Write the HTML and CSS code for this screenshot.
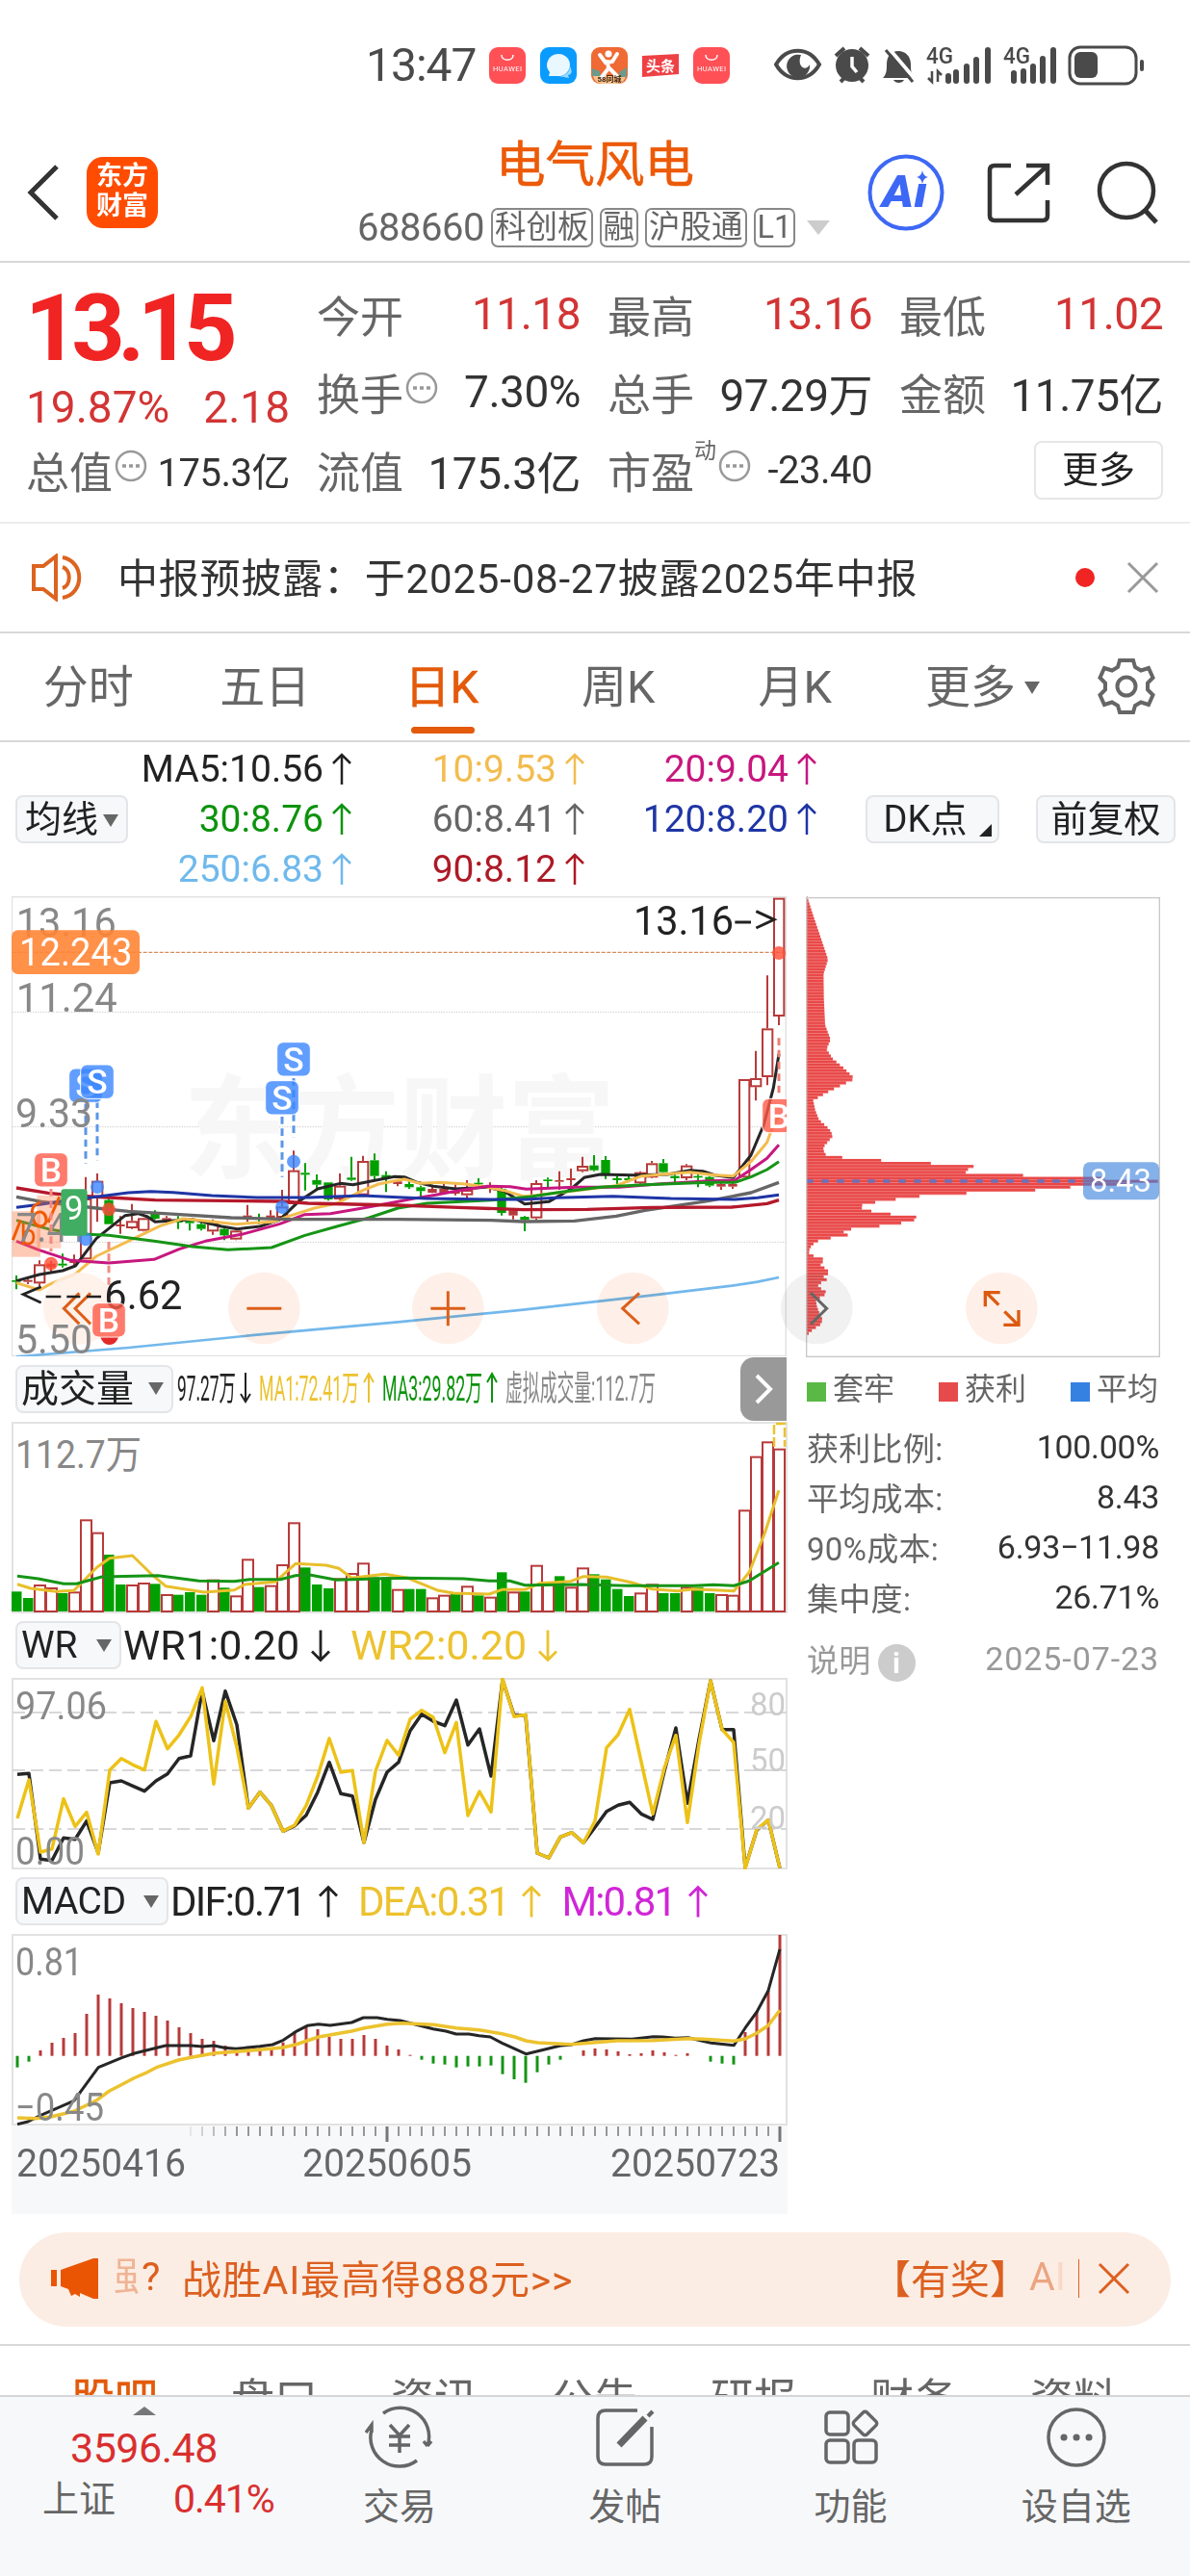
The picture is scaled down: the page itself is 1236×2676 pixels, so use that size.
FILE: index.html
```html
<!DOCTYPE html>
<html lang="zh-CN">

<head>
    <meta charset="UTF-8">
    <meta name="viewport" content="width=device-width, initial-scale=1.0">
    <title>电气风电 688660</title>
    <link rel="stylesheet" href="styles.css">
</head>

<body>
    <svg class="defs">
        <symbol id="up" viewBox="0 0 22 34"><path d="M11 33V2M2 11l9-9 9 9" /></symbol>
        <symbol id="down" viewBox="0 0 22 34"><path d="M11 1v31M2 23l9 9 9-9" /></symbol>
        <symbol id="dots" viewBox="0 0 34 34">
            <circle cx="17" cy="17" r="15" fill="none" stroke="#999" stroke-width="2.5" />
            <path d="M8 17h4M15 17h4M22 17h4" stroke="#999" stroke-width="3.5" />
        </symbol>
    </svg>

    <div class="status-bar">
        <span class="time">13:47</span>
        <svg class="app-icon" viewBox="0 0 38 38">
            <rect width="38" height="38" rx="9" fill="#ff5056" />
            <path d="M13 8c0 7 12 7 12 0" fill="none" stroke="#fff" stroke-width="1.5" />
            <text x="4" y="25" font-size="7.500" textLength="30" fill="#fff">HUAWEI</text>
        </svg>
        <svg class="app-icon" viewBox="0 0 38 38">
            <rect width="38" height="38" rx="9" fill="#0a9bff" />
            <path d="M19 7a12 11.500 0 0 0-9 19l-1 4h10a12 11.500 0 0 0 0-23z" fill="#e9f7ff" />
            <path d="M19 30c8 0 12-5 12-10 2 4 3 8-2 9l1 3z" fill="#9bd8ff" />
        </svg>
        <svg class="app-icon" viewBox="0 0 38 38">
            <rect width="38" height="38" rx="9" fill="#ef6a35" />
            <path d="M2 29h34a9 9 0 0 1-9 9H11a9 9 0 0 1-9-9z" fill="#f3c48d" />
            <path d="M1 22l8 3 1 5H1zM37 21l-8 5 1 5h7z" fill="#6d9a8b" />
            <circle cx="18" cy="7" r="3.500" fill="#fff" />
            <path d="M9 8l6 8 7-1 5-8M17 15l1 7-7 9M18 21l9 9" fill="none" stroke="#fff" stroke-width="4" stroke-linecap="round" />
            <text x="19" y="36" font-size="8" font-weight="bold" text-anchor="middle" fill="#4a2410">58同城</text>
        </svg>
        <svg class="app-icon" viewBox="0 0 38 38">
            <path d="M0 9l38-2v21L0 31z" fill="#ee4145" />
            <text x="19" y="25" font-size="15" font-weight="bold" text-anchor="middle" fill="#fff">头条</text>
        </svg>
        <svg class="app-icon" viewBox="0 0 38 38">
            <rect width="38" height="38" rx="9" fill="#ff5056" />
            <path d="M13 8c0 7 12 7 12 0" fill="none" stroke="#fff" stroke-width="1.5" />
            <text x="4" y="25" font-size="7.500" textLength="30" fill="#fff">HUAWEI</text>
        </svg>
        <svg class="status-icons" viewBox="804 46 390 44" fill="#4a4a4a">
            <path d="M806 67c11-19 34-19 45 0-11 19-34 19-45 0z" fill="none" stroke="#4a4a4a" stroke-width="4" />
            <path d="M832 57a12 12 0 1 0 9 10c-4 8-14 2-9-10z" />
            <circle cx="885" cy="68" r="17" />
            <path d="M868 58l9-8M902 58l-9-8M873 85l5-5M897 85l-5-5" stroke="#4a4a4a" stroke-width="4" />
            <path d="M885 59v10l5 6" fill="none" stroke="#fff" stroke-width="3.500" />
            <path d="M917 81c4-4 4-9 4-14 0-9 5-14 12-14s13 5 13 14c0 5 0 10 4 14zM928 83h11c-2 4-9 4-11 0z" />
            <path d="M923 50l28 33" stroke="#fff" stroke-width="4" />
            <path d="M920 52l28 33" stroke="#4a4a4a" stroke-width="3" />
            <path d="M985 84v-5M993 84v-9M1004 84v-15M1014 84v-22M1026 84V52M1053 84v-8M1063 84v-10M1073 84v-15M1083 84v-23M1094 84V52" stroke="#4a4a4a" stroke-width="6" stroke-linecap="round" />
            <path d="M968 74v11l-4-4M974 85V74l4 4" fill="none" stroke="#4a4a4a" stroke-width="2.500" />
            <text x="962" y="66" font-size="24" font-weight="500" textLength="28" lengthAdjust="spacingAndGlyphs">4G</text>
            <text x="1042" y="66" font-size="24" font-weight="500" textLength="28" lengthAdjust="spacingAndGlyphs">4G</text>
            <rect x="1111" y="49" width="69" height="38" rx="11" fill="none" stroke="#4a4a4a" stroke-width="3" />
            <rect x="1116" y="54" width="24" height="27" rx="6" />
            <rect x="1184" y="62" width="4" height="12" rx="2" />
        </svg>
    </div>

    <div class="header">
        <svg class="back" viewBox="0 0 36 60"><path d="M31 3L4 30l27 27" /></svg>
        <div class="logo">东方<br>财富</div>
        <div class="title-box">
            <div class="title">电气风电</div>
            <div class="sub-title">
                <span class="code">688660</span>
                <span class="tag">科创板</span>
                <span class="tag">融</span>
                <span class="tag">沪股通</span>
                <span class="tag">L1</span>
                <span class="tri big"></span>
            </div>
        </div>
        <svg class="header-icons" viewBox="900 156 310 88">
            <circle cx="941" cy="200" r="37.500" fill="none" stroke="#3d68f5" stroke-width="4" />
            <text x="916" y="215" font-size="47" font-weight="900" fill="#3d68f5" textLength="47" lengthAdjust="spacingAndGlyphs" class="ai">Aı</text>
            <path d="M958 177q1 6 6 7-5 1-6 7-1-6-6-7 5-1 6-7z" fill="#3d68f5" />
            <path d="M1050 172h-17q-5 0-5 5v47q0 5 5 5h50q5 0 5-5v-16M1066 172h22v20M1087 173l-32 29" fill="none" stroke="#333" stroke-width="4.500" />
            <circle cx="1170" cy="198" r="28" fill="none" stroke="#333" stroke-width="4.500" />
            <path d="M1188 217l13 14" stroke="#333" stroke-width="5" />
        </svg>
    </div>

    <div class="quote">
        <div class="price-box">
            <div class="price">13.15</div>
            <div class="change"><span>19.87%</span><span>2.18</span></div>
            <div class="cell small"><label>总值</label><svg class="info"><use href="#dots" /></svg><span>175.3亿</span></div>
        </div>
        <div class="grid">
            <div class="cell"><label>今开</label><span class="red">11.18</span></div>
            <div class="cell"><label>最高</label><span class="red">13.16</span></div>
            <div class="cell"><label>最低</label><span class="red">11.02</span></div>
            <div class="cell"><label>换手</label><svg class="info"><use href="#dots" /></svg><span>7.30%</span></div>
            <div class="cell"><label>总手</label><span>97.29万</span></div>
            <div class="cell"><label>金额</label><span>11.75亿</span></div>
            <div class="cell"><label>流值</label><span>175.3亿</span></div>
            <div class="cell small"><label>市盈</label><sup>动</sup><svg class="info"><use href="#dots" /></svg><span>-23.40</span></div>
            <div class="cell"><button class="more">更多</button></div>
        </div>
    </div>

    <div class="notice">
        <svg class="horn" viewBox="0 0 56 50">
            <path d="M3 13h10L26 3v44L13 37H3zM33 14c9 3 9 19 0 22M33 4c23 4 23 38 0 42" fill="none" stroke="#dc6420" stroke-width="4" />
        </svg>
        <span class="notice-text">中报预披露：于2025-08-27披露2025年中报</span>
        <i class="red-dot"></i>
        <svg class="close" viewBox="0 0 34 34"><path d="M2 2l30 30M32 2L2 32" /></svg>
    </div>

    <div class="tabs">
        <span class="tab">分时</span>
        <span class="tab">五日</span>
        <span class="tab active">日K</span>
        <span class="tab">周K</span>
        <span class="tab">月K</span>
        <span class="tab">更多<i class="tri"></i></span>
        <svg class="gear" viewBox="-30 -30 60 60">
            <path d="M-7-27H7L9-20 15-16.500 23-19 27.500-9 22-3.500V3.500L27.500 9 23 19 15 16.500 9 20 7 27H-7L-9 20-15 16.500-23 19-27.500 9-22 3.500V-3.500L-27.500-9-23-19-15-16.500-9-20z" />
            <circle r="9.500" />
        </svg>
    </div>

    <div class="ma">
        <button class="btn ma-btn">均线<i class="tri"></i></button>
        <div class="ma-grid">
            <span class="c-black">MA5:10.56<svg class="arr"><use href="#up" /></svg></span>
            <span class="c-yellow">10:9.53<svg class="arr"><use href="#up" /></svg></span>
            <span class="c-pink">20:9.04<svg class="arr"><use href="#up" /></svg></span>
            <span class="c-green">30:8.76<svg class="arr"><use href="#up" /></svg></span>
            <span class="c-gray">60:8.41<svg class="arr"><use href="#up" /></svg></span>
            <span class="c-blue">120:8.20<svg class="arr"><use href="#up" /></svg></span>
            <span class="c-sky">250:6.83<svg class="arr"><use href="#up" /></svg></span>
            <span class="c-red">90:8.12<svg class="arr"><use href="#up" /></svg></span>
        </div>
        <button class="btn dk">DK点<i class="corner"></i></button>
        <button class="btn fq">前复权</button>
    </div>

    <div class="charts">
        <div class="left">
            <svg id="kline" class="kline" viewBox="36 33 2415 1434"></svg>
            <div class="ind-head vol-head">
                <button class="btn">成交量<i class="tri"></i></button>
                <svg class="vol-text" viewBox="184 1420 585 48">
                    <text x="184" y="1456" textLength="61" lengthAdjust="spacingAndGlyphs" fill="#222">97.27万</text>
                    <text x="269" y="1456" textLength="104" lengthAdjust="spacingAndGlyphs" fill="#ecc22e">MA1:72.41万</text>
                    <text x="397" y="1456" textLength="104" lengthAdjust="spacingAndGlyphs" fill="#0d930d">MA3:29.82万</text>
                    <text x="525" y="1456" textLength="156" lengthAdjust="spacingAndGlyphs" fill="#888">虚拟成交量:112.7万</text>
                    <path d="M255 1427v29M250 1449l5 8 5-8" stroke="#222" />
                    <path d="M383 1458v-29M378 1437l5-9 5 9" stroke="#ecc22e" />
                    <path d="M511 1458v-29M506 1437l5-9 5 9" stroke="#0d930d" />
                </svg>
                <div class="side-btn"><svg viewBox="0 0 20 32"><path d="M3 2l14 14L3 30" /></svg></div>
            </div>
            <svg id="volume" class="volume" viewBox="12 1477 806 199"></svg>
            <div class="ind-head wr-head">
                <button class="btn">WR<i class="tri"></i></button>
                <span class="c-black">WR1:0.20<svg class="arr"><use href="#down" /></svg></span>
                <span class="c-gold">WR2:0.20<svg class="arr"><use href="#down" /></svg></span>
            </div>
            <svg id="wr" class="wr" viewBox="12 1743 806 199"></svg>
            <div class="ind-head macd-head">
                <button class="btn">MACD<i class="tri"></i></button>
                <span class="c-black">DIF:0.71<svg class="arr"><use href="#up" /></svg></span>
                <span class="c-gold">DEA:0.31<svg class="arr"><use href="#up" /></svg></span>
                <span class="c-purple">M:0.81<svg class="arr"><use href="#up" /></svg></span>
            </div>
            <svg id="macd" class="macd" viewBox="12 2009 806 199"></svg>
            <svg id="axis" class="axis" viewBox="12 2208 806 92"></svg>
        </div>
        <div class="right">
            <svg id="chips" class="chips" viewBox="51 33 1104 1437"></svg>
            <div class="legend">
                <span><i class="sq green"></i>套牢</span>
                <span><i class="sq red"></i>获利</span>
                <span><i class="sq blue"></i>平均</span>
            </div>
            <div class="stat"><label>获利比例:</label><span>100.00%</span></div>
            <div class="stat"><label>平均成本:</label><span>8.43</span></div>
            <div class="stat"><label>90%成本:</label><span>6.93−11.98</span></div>
            <div class="stat"><label>集中度:</label><span>26.71%</span></div>
            <div class="stat note"><label>说明<i class="i-icon">i</i></label><span>2025-07-23</span></div>
        </div>
    </div>

    <div class="banner">
        <svg class="speaker" viewBox="0 0 50 44"><path d="M0 13h6v17H0zM10 13L44 1h5v42h-5l-14-6v4l-5-3-4 2-3-7-8-3z" /></svg>
        <span class="faded">强</span><span class="q">?</span>
        <span class="banner-text">战胜AI最高得888元&gt;&gt;</span>
        <span class="prize">【有奖】</span>
        <span class="fade-a">A<b>I</b></span>
        <i class="bar"></i>
        <svg class="close" viewBox="0 0 34 34"><path d="M2 2l30 30M32 2L2 32" /></svg>
    </div>

    <div class="sub-tabs">
        <span class="active">股吧</span>
        <span>盘口</span>
        <span>资讯</span>
        <span>公告</span>
        <span>研报</span>
        <span>财务</span>
        <span>资料</span>
    </div>

    <div class="bottom-bar">
        <div class="index">
            <i class="tri-up"></i>
            <div class="index-num">3596.48</div>
            <div class="index-row"><span>上证</span><span class="pct">0.41%</span></div>
        </div>
        <div class="nav">
            <svg viewBox="-36 -36 72 72">
                <path d="M-17-25A30 30 0 0 1 29 9M29 9l4-5M29 9l-4-5M18 24A30 30 0 0 1-29-8M-35-5l6-8v8M-10-13L0-2 10-13M0-2V16M-11-1H11M-11 8H11" />
            </svg>
            <span>交易</span>
        </div>
        <div class="nav">
            <svg viewBox="-36 -36 72 72">
                <path d="M13-28H-20q-8 0-8 8V20q0 8 8 8H20q8 0 8-8V-11" />
                <path d="M25-26l3 3M21-20L-6 8" stroke-width="7" />
            </svg>
            <span>发帖</span>
        </div>
        <div class="nav">
            <svg viewBox="-36 -36 72 72">
                <rect x="-26" y="-26" width="23" height="23" rx="4" />
                <rect x="-26" y="3" width="23" height="23" rx="4" />
                <rect x="3" y="3" width="23" height="23" rx="4" />
                <rect x="5" y="-24" width="19" height="19" rx="3" transform="rotate(45 14.500 -14.500)" />
            </svg>
            <span>功能</span>
        </div>
        <div class="nav">
            <svg viewBox="-36 -36 72 72">
                <circle r="29" />
                <path d="M-13 0h.1M0 0h.1M13 0h.1" stroke-width="7" stroke-linecap="round" />
            </svg>
            <span>设自选</span>
        </div>
    </div>
    <script src="charts.js"></script>
</body>

</html>
```
FILE: styles.css
```css
* {
    box-sizing: border-box;
}

body {
    margin: 0;
    width: 1236px;
    height: 2676px;
    overflow: hidden;
    display: flex;
    flex-direction: column;
    background: #fff;
    color: #333;
    font-family: Roboto, "Noto Sans CJK SC", sans-serif;
}

span,
label,
button,
div {
    white-space: nowrap;
}

button {
    font-family: inherit;
    padding: 0;
    color: #222;
}

svg {
    display: block;
    flex: none;
}

svg text {
    font-family: Roboto, "Noto Sans CJK SC", sans-serif;
}

.defs {
    position: absolute;
    width: 0;
    height: 0;
}

.tri {
    display: inline-block;
    border: 8px solid transparent;
    border-top: 13px solid #666;
    border-bottom: 0;
}

.tri.big {
    border-width: 15px 12px 0;
    border-top-color: #ccc;
    margin-left: 5px;
}

/* status bar */
.status-bar {
    height: 138px;
    padding: 0 0 2px 380px;
    display: flex;
    align-items: center;
    gap: 15px;
}

.time {
    width: 113px;
    font-size: 48px;
    letter-spacing: -1px;
    color: #4a4a4a;
}

.app-icon {
    width: 38px;
    height: 38px;
}

.status-icons {
    width: 390px;
    height: 44px;
    margin-left: 31px;
}

/* header */
.header {
    height: 135px;
    padding-left: 28px;
    display: flex;
    border-bottom: 2px solid #d8d8d8;
}

.back {
    width: 36px;
    height: 60px;
    margin-top: 32px;
    fill: none;
    stroke: #333;
    stroke-width: 5;
}

.logo {
    width: 74px;
    height: 74px;
    margin: 25px 0 0 26px;
    padding-top: 5px;
    border-radius: 17px;
    background: #ff4c00;
    color: #fff;
    font-size: 27px;
    font-weight: bold;
    line-height: 31px;
    text-align: center;
}

.title-box {
    width: 500px;
    margin-left: 207px;
}

.title {
    margin: 0 0 0 144px;
    font-size: 51.500px;
    line-height: 68px;
    color: #ec5a08;
    -webkit-text-stroke: .6px #ec5a08;
}

.sub-title {
    display: flex;
    align-items: center;
    gap: 7px;
    margin-top: 10px;
    height: 42px;
}

.code {
    width: 132px;
    font-size: 40px;
    letter-spacing: -.5px;
    color: #666;
}

.tag {
    height: 41px;
    padding: 0 2px;
    border: 2px solid #888;
    border-radius: 7px;
    font-size: 32.500px;
    line-height: 36px;
    color: #666;
}

.header-icons {
    width: 310px;
    height: 88px;
    margin: 18px 0 0 29px;
}

.ai {
    font-style: italic;
}

/* quote */
.quote {
    height: 271px;
    display: flex;
    padding: 13px 27px 0 27px;
    border-bottom: 2px solid #ececec;
}

.price-box {
    width: 302px;
    padding-right: 28px;
}

.price {
    height: 105px;
    margin-left: -1px;
    font-size: 97px;
    line-height: 111px;
    font-weight: bold;
    letter-spacing: -7.500px;
    color: #f12424;
}

.change {
    height: 57px;
    display: flex;
    justify-content: space-between;
    font-size: 46px;
    line-height: 64px;
    color: #d33434;
}

.grid {
    display: grid;
    flex: 1;
    grid-template-columns: 274px 275px 274px;
    grid-template-rows: 81px 81px 81px;
    column-gap: 28px;
}

.cell {
    display: flex;
    align-items: center;
    height: 81px;
    font-size: 46px;
}

.cell label {
    font-size: 45px;
    color: #666;
}

.cell span {
    margin-left: auto;
    letter-spacing: -.5px;
}

.cell.small span {
    font-size: 40px;
}

.cell .red {
    color: #d33434;
}

.info {
    width: 34px;
    height: 34px;
    margin: -8px 0 0 2px;
}

.cell sup {
    font-size: 23px;
    color: #666;
    margin: -44px 0 0 0;
}

.more {
    width: 134px;
    height: 61px;
    margin-left: auto;
    border: 2px solid #e6e6e6;
    border-radius: 8px;
    background: #fff;
    font-size: 38px;
    line-height: 48px;
}

/* notice */
.notice {
    height: 114px;
    display: flex;
    align-items: center;
    padding: 0 32px 0 32px;
    border-bottom: 2px solid #d8d8d8;
}

.horn {
    width: 56px;
    height: 50px;
}

.notice-text {
    margin: -5px 0 0 34px;
    font-size: 42px;
    letter-spacing: .8px;
}

.red-dot {
    width: 20px;
    height: 20px;
    margin-left: auto;
    border-radius: 50%;
    background: #f12424;
}

.close {
    width: 34px;
    height: 34px;
    margin-left: 33px;
    fill: none;
    stroke: #999;
    stroke-width: 3;
}

/* tabs */
.tabs {
    height: 113px;
    display: flex;
    align-items: center;
    border-bottom: 2px solid #d8d8d8;
    font-size: 47px;
    color: #666;
}

.tab {
    position: relative;
    width: 183.500px;
    line-height: 113px;
    text-align: center;
}

.tab:nth-child(6) {
    width: 206px;
}

.tab .tri {
    margin: 0 0 9px 9px;
}

.tab.active {
    color: #e35a0a;
    -webkit-text-stroke: .6px #e35a0a;
}

.tab.active::after {
    content: "";
    position: absolute;
    left: 60px;
    bottom: 8px;
    width: 66px;
    height: 7px;
    border-radius: 4px;
    background: #e35a0a;
}

.gear {
    width: 60px;
    height: 60px;
    margin-left: 16px;
    fill: none;
    stroke: #666;
    stroke-width: 4;
}

/* moving averages */
.btn {
    height: 50px;
    border: 2px solid #e4e5e8;
    border-radius: 8px;
    background: #f7f8fa;
    font-size: 38px;
    line-height: 42px;
    flex: none;
}

.ma {
    height: 160px;
    display: flex;
    align-items: center;
    padding-left: 16px;
}

.ma-btn {
    width: 117px;
}

.ma-btn .tri {
    margin: 0 0 5px 5px;
}

.ma-grid {
    display: grid;
    grid-template-columns: 233px 242px 241px;
    grid-template-rows: 52px 52px 52px;
    width: 716px;
}

.ma-grid span {
    display: flex;
    justify-content: flex-end;
    align-items: center;
    font-size: 39px;
}

.arr {
    width: 22px;
    height: 34px;
    margin-left: 8px;
    fill: none;
    stroke: currentColor;
    stroke-width: 2.500;
}

.dk {
    position: relative;
    width: 139px;
    margin-left: 50px;
    padding-right: 15px;
}

.corner {
    position: absolute;
    right: 6px;
    bottom: 5px;
    border-left: 13px solid transparent;
    border-bottom: 13px solid #222;
}

.fq {
    width: 145px;
    margin-left: 38px;
}

.c-black { color: #222; }
.c-yellow { color: #f3bc4f; }
.c-pink { color: #c7177f; }
.c-green { color: #0d930d; }
.c-gray { color: #666; }
.c-blue { color: #1f35a5; }
.c-sky { color: #6fb9ec; }
.c-red { color: #ad1a26; }
.c-gold { color: #ecc22e; }
.c-purple { color: #d026d6; }

/* charts */
.charts {
    height: 1389px;
    display: flex;
}

.left {
    width: 806px;
    margin-left: 12px;
}

.kline {
    width: 805px;
    height: 478px;
}

.ind-head {
    height: 68px;
    display: flex;
    align-items: center;
    padding-left: 4px;
    font-size: 43px;
}

.ind-head .btn {
    display: flex;
    align-items: center;
    justify-content: space-between;
    padding: 0 8px 0 4px;
    font-size: 39px;
}

.vol-head .btn {
    width: 164px;
}

.vol-text {
    width: 585px;
    height: 48px;
    margin-left: 4px;
    font-size: 36px;
    fill: none;
    stroke-width: 2;
}

.side-btn {
    width: 48px;
    height: 66px;
    flex: none;
    display: flex;
    align-items: center;
    justify-content: center;
    border-radius: 14px 0 0 14px;
    background: #999;
}

.side-btn svg {
    width: 20px;
    height: 32px;
    fill: none;
    stroke: #fff;
    stroke-width: 4;
}

.volume,
.wr,
.macd {
    width: 806px;
    height: 199px;
}

.wr-head,
.macd-head {
    height: 67px;
}

.wr-head .btn {
    width: 110px;
}

.macd-head .btn {
    width: 159px;
}

.ind-head > span {
    display: flex;
    align-items: center;
    margin-left: 2px;
}

.ind-head > span + span {
    margin-left: 20px;
}

.ind-head .arr {
    height: 37px;
    margin-left: 11px;
    stroke-width: 2.800;
}

.macd-head {
    font-size: 42px;
    letter-spacing: -1.800px;
}

.macd-head .btn {
    letter-spacing: -.5px;
}

.macd-head .arr {
    margin-left: 13px;
}

.axis {
    width: 806px;
    height: 92px;
    background: #f7f8fa;
}

.right {
    width: 368px;
    margin-left: 19px;
}

.chips {
    position: relative;
    width: 368px;
    height: 479px;
    overflow: visible;
}

.legend {
    height: 63px;
    display: flex;
    justify-content: space-between;
    align-items: center;
    padding: 0 2px 2px 1px;
    font-size: 32px;
    color: #666;
}

.sq {
    display: inline-block;
    width: 20px;
    height: 20px;
    margin-right: 7px;
    vertical-align: -2px;
}

.sq.green { background: #5ab946; }
.sq.red { background: #e74a4a; }
.sq.blue { background: #3581e2; }

.stat {
    height: 52px;
    display: flex;
    justify-content: space-between;
    align-items: center;
    padding: 9px 1px 0 1px;
    font-size: 34px;
    letter-spacing: -.3px;
}

.stat label {
    font-size: 33px;
    letter-spacing: .3px;
    color: #666;
}

.note,
.note label {
    color: #999;
}

.note {
    margin-top: 11px;
    height: 54px;
    letter-spacing: .9px;
}

.i-icon {
    display: inline-block;
    width: 39px;
    height: 39px;
    margin-left: 7px;
    border-radius: 50%;
    background: #ccc;
    color: #fff;
    font: bold 30px/39px Roboto, sans-serif;
    text-align: center;
    vertical-align: -1px;
}

/* banner */
.banner {
    height: 98px;
    margin: 0 20px;
    padding: 0 42px 2px 33px;
    display: flex;
    align-items: center;
    border-radius: 49px;
    background: #fcede4;
    color: #dc6020;
    font-size: 41px;
}

.banner span {
    margin-top: -4px;
}

.speaker {
    width: 50px;
    height: 44px;
    fill: #ea5504;
}

.faded {
    width: 26px;
    height: 56px;
    line-height: 56px;
    margin-left: 16px;
    overflow: hidden;
    direction: rtl;
    opacity: .4;
}

.q {
    width: 40px;
    padding-left: 2px;
}

.banner-text {
    margin-left: 4px;
    letter-spacing: .8px;
}

.prize {
    margin-left: auto;
}

.fade-a {
    width: 42px;
    opacity: .5;
}

.fade-a b {
    font-weight: normal;
    opacity: .3;
}

.bar {
    width: 1px;
    height: 40px;
    margin-left: 9px;
    background: #dc6020;
}

.banner .close {
    margin-left: 19px;
    stroke: #dc6020;
}

/* lower tabs, cut off by the fixed bar */
.sub-tabs {
    height: 53px;
    margin-top: 18px;
    padding: 24px 0 0 36px;
    display: flex;
    overflow: hidden;
    border-top: 2px solid #d8d8d8;
    color: #666;
    font-size: 45px;
    line-height: 66px;
}

.sub-tabs span {
    width: 166px;
    flex: none;
    text-align: center;
}

.sub-tabs .active {
    color: #e35a0a;
    -webkit-text-stroke: .6px #e35a0a;
}

.bottom-bar {
    height: 188px;
    display: flex;
    padding-right: 1px;
    border-top: 2px solid #d4d6d9;
    background: #f7f8fa;
    color: #666;
}

.index {
    width: 298px;
    padding-top: 10px;
}

.tri-up {
    display: block;
    width: 0;
    margin-left: 138px;
    border: 12px solid transparent;
    border-bottom: 9px solid #777;
    border-top: 0;
}

.index-num {
    margin: 8px 0 0 73px;
    font-size: 43px;
    line-height: 52px;
    color: #d92f2f;
    letter-spacing: -.5px;
}

.index-row {
    display: flex;
    justify-content: space-between;
    margin-left: 44px;
    padding-right: 13px;
    font-size: 38px;
    line-height: 55px;
}

.pct {
    font-size: 41px;
    color: #d92f2f;
    letter-spacing: -1px;
}

.nav {
    width: 234.400px;
    padding-top: 6px;
    display: flex;
    flex-direction: column;
    align-items: center;
    font-size: 38px;
    line-height: 56px;
}

.nav svg {
    width: 72px;
    height: 72px;
    margin-bottom: 8px;
    fill: none;
    stroke: #666;
    stroke-width: 3.500;
}
```
FILE: charts.js
```js
const RED = '#b83a3a', GREEN = '#00a000';
const step = 12, x0 = 17;

function rect(x, y, w, h, attrs) {
    return `<rect x="${x}" y="${y}" width="${w}" height="${h}" ${attrs}/>`;
}

function line(pts, color, width) {
    return `<polyline points="${pts}" fill="none" stroke="${color}" stroke-width="${width}" stroke-linejoin="round"/>`;
}

function label(x, y, text, size, color, length) {
    return `<text x="${x}" y="${y}" font-size="${size}" fill="${color}" ${length ? `textLength="${length}" lengthAdjust="spacingAndGlyphs"` : ''}>${text}</text>`;
}

// points given as x,y pairs on the drawing grid of an indicator panel
function scale(str, top) {
    return str.split(' ').map(p => {
        const [x, y] = p.split(',');
        return (x / 1.889).toFixed(1) + ',' + (top + y / 3).toFixed(1);
    }).join(' ');
}

/* ---------- K line: type,high,bodyTop,bodyBottom,low (h = hollow, r = red solid, g = green) ---------- */
const candles = `g,1215,1230,1235,1258 r,1218,1229,1235,1242 h,1168,1180,1240,1248 r,1170,1178,1190,1205 g,1147,1178,1184,1190
r,1150,1170,1176,1182 h,908,975,1165,1165 h,897,920,975,1048 g,975,980,1055,1055 r,1030,1056,1062,1085 h,992,1045,1068,1070
h,1035,1036,1076,1078 g,1012,1020,1038,1040 r,1030,1036,1043,1045 g,1030,1042,1050,1070 g,1040,1045,1052,1075 g,1045,1055,1070,1075
h,1040,1052,1078,1088 g,1065,1070,1090,1105 h,1072,1075,1103,1105 r,995,1028,1035,1048 g,1022,1048,1053,1055 r,1012,1028,1036,1040
h,948,1000,1035,1035 h,826,887,993,993 g,865,895,901,950 g,900,918,932,945 g,925,925,978,982 h,897,935,978,980 g,845,910,917,920
h,842,858,965,967 g,835,856,905,918 g,890,902,912,955 r,915,922,930,937 g,920,930,940,945 g,935,940,952,978 r,935,945,957,958
r,925,945,958,962 r,930,952,960,965 h,918,948,965,975 g,912,926,931,935 r,925,938,943,958 g,940,945,1020,1028 r,1010,1012,1028,1040
g,1030,1032,1042,1077 h,918,927,1037,1042 g,910,916,921,940 r,890,918,923,948 r,882,912,918,935 h,845,873,890,893 g,840,872,887,890
g,843,855,900,915 g,905,912,918,930 g,903,912,918,925 h,890,893,928,930 h,858,865,910,912 g,852,865,893,895 g,900,905,912,930
h,868,872,912,918 g,900,905,910,940 g,905,908,935,940 r,925,930,938,948 r,920,930,938,945 h,603,603,910,910 h,515,600,628,670
h,280,445,597,622 h,38,38,408,435`.split(/\s+/);

const averages = [
    ['#73b8ec', 8, '51,1468 400,1440 800,1400 1240,1360 1630,1322 2030,1277 2280,1247 2360,1235 2427,1221'],
    ['#262626', 9, '51,1232 123,1212 195,1200 235,1185 300,1100 390,1028 430,1022 460,1032 483,1048 600,1040 690,1062 740,1070 810,1062 870,1042 930,985 990,945 1060,928 1100,932 1160,920 1230,907 1260,908 1300,925 1350,937 1420,945 1520,940 1570,952 1635,992 1710,985 1780,945 1820,910 1870,900 1970,902 2080,900 2150,887 2190,890 2230,903 2285,910 2340,840 2380,745 2410,630 2427,525'],
    ['#f3bc4f', 9, '51,1238 123,1260 160,1240 235,1210 300,1155 400,1108 500,1060 570,1038 640,1045 735,1055 850,1048 900,1030 980,1005 1050,990 1130,950 1180,930 1240,918 1260,915 1310,928 1370,925 1450,930 1520,940 1570,950 1630,968 1670,965 1920,935 2000,905 2090,898 2150,893 2230,902 2285,905 2340,860 2390,800 2410,745 2427,720'],
    ['#c7177f', 9, '51,1108 120,1135 220,1168 339,1176 480,1165 560,1132 640,1108 760,1085 870,1055 950,1025 1030,1022 1130,1005 1240,985 1290,975 1350,965 1430,950 1520,937 1590,938 1640,946 1790,940 1930,940 2050,930 2210,920 2290,918 2340,885 2390,850 2427,808'],
    ['#169416', 9, '51,1043 150,1070 240,1085 339,1090 480,1108 600,1125 710,1135 846,1128 950,1090 1050,1062 1150,1035 1240,1005 1330,990 1530,980 1650,970 1750,955 1870,940 2010,932 2210,925 2290,925 2340,908 2390,885 2427,860'],
    ['#666', 10, '51,970 130,985 300,1005 400,1015 560,1025 720,1035 900,1040 1240,1040 1530,1043 1630,1047 1790,1045 1920,1030 2010,1012 2210,982 2340,957 2427,925'],
    ['#b5182b', 10, '51,942 150,958 231,966 339,972 483,980 700,982 880,984 960,990 1240,996 1430,1003 1630,1010 1830,1009 2030,1003 2280,1002 2390,991 2427,980'],
    ['#1f35a5', 9, '51,1003 130,993 200,982 300,970 400,957 470,953 540,956 660,966 800,972 960,972 1130,966 1240,971 1330,975 1530,978 1640,978 1730,973 1910,968 2090,975 2290,978 2360,973 2427,964']
];

function badge(x, y, letter, color) {
    return rect(x - 52, y - 53, 104, 106, `rx="20" fill="${color}" fill-opacity=".8" stroke="#fff" stroke-width="3"`) +
        `<text x="${x}" y="${y + 38}" font-size="106" font-weight="500" text-anchor="middle" fill="#fff">${letter}</text>`;
}

function guide(x, y1, y2, color) {
    return `<path d="M${x} ${y1}V${y2}" stroke="${color}" stroke-width="9" stroke-dasharray="23 14"/>`;
}

function roundBtn(x, color, icon, stroke) {
    return `<circle cx="${x}" cy="1317" r="112" fill="${color}"/><path d="${icon}" transform="translate(${x} 1318)" fill="none" stroke="${stroke}" stroke-width="9"/>`;
}

let k = rect(37, 35, 2412, 1431, 'fill="#fff" stroke="#e2e2e2" stroke-width="5"');
k += '<path d="M38 394H2448M38 752H2448M38 1111H2448" stroke="#ccc" stroke-width="3" stroke-dasharray="4 4"/>';
k += `<text x="572" y="885" font-size="350" font-weight="bold" fill="#f7f7f7" textLength="1345" lengthAdjust="spacingAndGlyphs">东方财富</text>`;
candles.forEach((c, i) => {
    const [type, hi, top, bottom, lo] = c.split(',').map((v, n) => n ? +v : v);
    const x = 51 + 36 * i;
    const color = type === 'g' ? GREEN : RED;
    k += `<path d="M${x} ${hi}V${top}M${x} ${bottom}V${lo}" stroke="${color}" stroke-width="6"/>`;
    if (type === 'h') {
        k += rect(x - 15, top + 3, 31, Math.max(bottom - top - 6, 4), `fill="#fff" stroke="${color}" stroke-width="6"`);
    } else {
        k += rect(x - 14, top, 28, bottom - top, `fill="${color}"`);
    }
});
averages.forEach(([color, width, pts]) => k += line(pts, color, width));
k += '<path d="M38 208H2448" stroke="#d98a5c" stroke-width="4" stroke-dasharray="12 5"/>';
// buy / sell marks
k += rect(38, 1015, 88, 142, 'fill="#ff7a45" fill-opacity=".4"') + rect(115, 965, 75, 165, 'fill="#ff7a45" fill-opacity=".35"');
k += '<text x="100" y="1072" font-size="110" fill="#f25a00" transform="rotate(-15 100 1072)">6</text><text x="62" y="1118" font-size="90" fill="#f25a00">b</text><path d="M40 1105l24-62M150 1050l35-80" stroke="#f25a00" stroke-width="9"/>';
k += label(50, 1110, '7.41', 130, '#888', 225);
k += guide(159, 945, 1140, '#f28a80') + guide(339, 1110, 1300, '#f28a80') + guide(2427, 475, 660, '#e98073');
k += guide(267, 680, 866, '#5a96e8') + guide(303, 670, 856, '#5a96e8') + guide(879, 720, 908, '#5a96e8') + guide(915, 600, 786, '#5a96e8');
k += [[267, 1102], [303, 939], [879, 1002], [915, 860]].map(p => `<circle cx="${p[0]}" cy="${p[1]}" r="21" fill="#3a86ff" fill-opacity=".8"/>`).join('');
k += [[159, 1178], [339, 1009], [2427, 210]].map(p => `<circle cx="${p[0]}" cy="${p[1]}" r="21" fill="#ff4b32" fill-opacity=".8"/>`).join('');
k += rect(190, 946, 82, 145, 'rx="10" fill="#40ad62"') + label(201, 1040, '9', 104, '#fff');
k += badge(267, 623, 'S', '#3a86ff') + badge(303, 611, 'S', '#3a86ff') + badge(879, 661, 'S', '#3a86ff') + badge(915, 541, 'S', '#3a86ff');
k += badge(159, 886, 'B', '#ff5a49') + badge(2427, 717, 'B', '#ff5a49');
k += label(50, 158, '13.16', 130, '#888', 312) + label(50, 392, '11.24', 130, '#888', 315) + label(48, 752, '9.33', 130, '#888', 240);
k += rect(36, 139, 399, 137, 'rx="20" fill="#ff8535" fill-opacity=".9"') + label(60, 248, '12.243', 122, '#fff', 352);
k += label(1974, 152, '13.16', 130, '#222', 312) + '<path d="M2290 114h50M2356 80l56 26-56 26" fill="none" stroke="#222" stroke-width="9"/>';
k += roundBtn(247, '#fef0e8', 'M0-48L-48 0 0 48M35-48L-13 0 35 48', '#dc5f1a').replace('<circle', '<circle fill-opacity=".85"');
k += '<path d="M128 1250l-56 24 56 26M143 1281h47M208 1281h42M270 1281h45" fill="none" stroke="#222" stroke-width="8"/>';
k += label(325, 1319, '6.62', 130, '#222', 243);
k += label(48, 1457, '5.50', 130, '#888', 240);
k += '<path d="M312 1405h58q-8 26-29 26t-29-26z" fill="#e32a2a"/>' + badge(339, 1354, 'B', '#ff5a49');
const soft = s => s.replace('<circle', '<circle style="mix-blend-mode:multiply"');
k += soft(roundBtn(823, '#fef0e8', 'M-54 0H54', '#dc5f1a'));
k += soft(roundBtn(1396, '#fef0e8', 'M-54 0H54M0-54V54', '#dc5f1a'));
k += soft(roundBtn(1972, '#fef0e8', 'M20-48L-32 0 20 48', '#dc5f1a'));
document.getElementById('kline').innerHTML = k;

/* ---------- volume ---------- */
const vols = 'g730 g750 r708 r717 g735 r730 r505 r545 g615 g708 r708 r702 g706 r738 g740 g732 g740 r692 g718 r742 r628 g716 r710 r645 r514 g655 g708 g720 r688 r672 r640 g685 g685 r722 g722 g722 r748 r740 g738 r712 g742 r746 g670 r730 g730 r647 r700 g682 r715 r655 g676 g692 g722 g744 r733 r706 g735 g735 r715 g716 g735 r738 r740 r475 r308 r262 r284'.split(' ');
let v = rect(13, 1478, 804, 197, 'fill="#fff" stroke="#e2e2e2" stroke-width="2"');
vols.forEach((s, i) => {
    const top = 1410 + s.slice(1) / 3, x = x0 + step * i;
    v += s[0] === 'g'
        ? rect(x - 5, top, 10.5, 1674 - top, `fill="${GREEN}"`)
        : rect(x - 5, top + 1, 11, 1673 - top, `fill="#fff" stroke="${RED}" stroke-width="2"`);
});
v += '<path d="M804 1503v-24h11v24" fill="none" stroke="#ecc22e" stroke-width="2.500" stroke-dasharray="10 3"/>';
v += line(scale('34,707 60,720 110,730 145,727 190,655 215,626 260,618 300,680 325,713 400,732 460,725 480,708 540,700 580,643 640,648 665,658 690,688 755,676 800,688 860,727 890,735 960,738 985,724 1030,724 1060,704 1120,698 1145,683 1190,685 1240,702 1280,722 1330,728 1360,722 1440,728 1470,670 1500,550 1528,415', 1410), '#e8bf2b', 3);
v += line(scale('34,682 75,690 125,706 150,706 200,684 310,680 390,697 460,698 490,692 550,692 580,680 605,677 660,694 740,690 800,688 910,690 960,697 1000,697 1030,710 1140,708 1230,712 1360,712 1400,709 1440,712 1470,697 1528,640', 1410), '#169416', 3);
v += label(16, 1525, '112.7万', 40, '#888', 131);
document.getElementById('volume').innerHTML = v;

/* ---------- WR ---------- */
const wr1 = [340, 337, 604, 608, 538, 542, 485, 585, 366, 360, 376, 392, 360, 338, 290, 282, 80, 235, 80, 185, 445, 395, 437, 517, 500, 467, 395, 302, 400, 407, 552, 418, 333, 302, 204, 152, 174, 188, 108, 248, 198, 345, 45, 156, 156, 585, 600, 535, 521, 553, 505, 455, 436, 427, 463, 480, 330, 195, 430, 230, 48, 200, 200, 630, 514, 482, 632];
const wr2 = [477, 357, 582, 572, 416, 502, 458, 588, 326, 290, 310, 326, 175, 260, 217, 160, 70, 370, 112, 255, 445, 395, 437, 517, 498, 437, 345, 228, 333, 328, 553, 330, 234, 280, 168, 140, 162, 272, 178, 468, 393, 457, 42, 160, 154, 585, 600, 535, 521, 553, 485, 257, 216, 137, 300, 463, 320, 218, 490, 245, 48, 200, 240, 632, 512, 482, 632];
const byIndex = arr => arr.map((y, i) => `${18 + step * i},${(1730 + y / 3).toFixed(1)}`).join(' ');
let w = rect(13, 1744, 804, 197, 'fill="#fff" stroke="#e2e2e2" stroke-width="2"');
w += '<path d="M13 1779H817M13 1839H817M13 1900H817" stroke="#ccc" stroke-width="1.500" stroke-dasharray="13 6"/>';
w += line(byIndex(wr1), '#262626', 3.5) + line(byIndex(wr2), '#edc218', 3.5);
w += label(16, 1786, '97.06', 40, '#888', 95) + label(16, 1937, '0.00', 40, '#888', 72);
w += label(779, 1782, '80', 33, '#ccc') + label(779, 1840, '50', 33, '#ccc') + label(779, 1900, '20', 33, '#ccc');
document.getElementById('wr').innerHTML = w;

/* ---------- MACD ---------- */
const hist = [473, 455, 420, 396, 381, 366, 306, 246, 258, 273, 288, 300, 312, 327, 348, 366, 384, 390, 405, 420, 415, 412, 415, 395, 360, 348, 354, 378, 384, 384, 372, 384, 405, 417, 434, 449, 461, 464, 473, 470, 470, 467, 494, 510, 521, 488, 464, 449, 437, 420, 414, 417, 423, 432, 429, 420, 426, 434, 429, 437, 455, 461, 464, 363, 300, 234, 60];
let m = rect(13, 2010, 804, 197, 'fill="#fff" stroke="#e2e2e2" stroke-width="2"');
hist.forEach((y, i) => {
    m += `<path d="M${18 + step * i} 2135.700V${1990 + y / 3}" stroke="${y > 437 ? '#159415' : '#b83a3a'}" stroke-width="3"/>`;
});
m += line(scale('34,650 55,642 80,622 145,577 193,473 240,442 262,430 325,405 375,405 397,408 420,405 440,412 463,415 510,407 535,402 556,388 580,362 603,343 625,338 648,342 690,333 713,318 740,318 760,323 785,327 850,353 875,360 895,369 920,369 940,374 962,378 985,397 1032,431 1100,405 1120,403 1145,390 1168,383 1240,385 1282,377 1300,378 1325,382 1350,380 1395,397 1440,404 1462,350 1485,300 1507,235 1530,105', 1990), '#262626', 3);
m += line(scale('34,630 70,632 100,627 145,610 190,575 215,546 238,527 262,507 285,491 307,473 350,450 380,440 420,429 500,419 555,411 580,402 625,378 690,360 715,350 760,338 790,335 850,340 895,350 940,356 985,368 1010,378 1032,390 1055,396 1120,401 1210,390 1280,389 1350,383 1380,385 1440,391 1462,384 1485,366 1507,343 1530,295', 1990), '#ecc22e', 3.5);
m += label(16, 2052, '0.81', 40, '#888', 70) + label(16, 2203, '−0.45', 40, '#888', 92);
document.getElementById('macd').innerHTML = m;

/* ---------- date axis ---------- */
let a = '';
for (let i = 15; i <= 66; i++) {
    const long = i === 32 || i === 66;
    a += `<path d="M${18 + step * i} 2209V${long ? 2225 : 2219}" stroke="#777" stroke-width="${long ? 3 : 1.5}" opacity="${Math.min(1, (i - 14) / 5)}"/>`;
}
a += label(17, 2261, '20250416', 40, '#666', 176) + label(314, 2261, '20250605', 40, '#666', 176) + label(634, 2261, '20250723', 40, '#666', 176);
document.getElementById('axis').innerHTML = a;

/* ---------- cost distribution ---------- */
const outline = '38,56 100,76 170,100 230,120 275,106 350,107 435,111 480,128 510,115 540,135 570,170 602,203 620,165 640,125 660,90 670,74 700,80 730,92 760,125 780,135 800,118 815,105 832,108 838,113 847,163 856,279 865,429 874,575 883,562 892,523 901,671 910,940 921,1152 930,1080 940,876 949,775 958,563 967,413 976,340 986,270 995,227 1004,222 1014,252 1023,308 1033,395 1042,390 1051,353 1060,290 1070,193 1080,168 1090,183 1099,123 1108,87 1118,73 1128,65 1140,60 1150,62 1155,78 1162,104 1172,104 1182,97 1192,110 1200,120 1212,120 1220,105 1230,118 1240,93 1250,88 1265,113 1278,108 1290,82 1310,85 1330,92 1350,102 1365,100 1375,85 1390,65 1400,56'.split(' ').map(p => p.split(',').map(Number));
function widthAt(y) {
    for (let i = 1; i < outline.length; i++) {
        const [y1, w1] = outline[i - 1], [y2, w2] = outline[i];
        if (y <= y2) return w1 + (w2 - w1) * (y - y1) / (y2 - y1) - 54;
    }
    return 0;
}
let c = '';
for (let n = 0; n < 147; n++) {
    const y = 38 + n * 9.3, bw = widthAt(y).toFixed(1);
    c += rect(54, y - 4.6, bw, 9.3, 'fill="#e94848"') + rect(54, y + 3, bw, 1.8, 'fill="#f49090"');
}
c += '<path d="M54 921H915" stroke="#6b70b8" stroke-width="10" stroke-dasharray="22 26" stroke-dashoffset="2"/>';
c += rect(53, 38, 1100, 1430, 'fill="none" stroke="#c8c8c8" stroke-width="4"');
c += rect(915, 862, 237, 117, 'rx="20" fill="#3a81dd" fill-opacity=".62"') + label(936, 954, '8.43', 100, '#fff', 192);
c += '<circle cx="85" cy="1317" r="112" fill="#666" fill-opacity=".09"/><path d="M66 1269l50 49-50 49" fill="none" stroke="#666" stroke-width="9"/>';
c += '<circle cx="661" cy="1317" r="112" fill="#fef0e8"/><path d="M652 1307l-38-38M610 1312v-44h46M670 1327l40 40M714 1323v46h-47" fill="none" stroke="#dc5a10" stroke-width="10"/>';
document.getElementById('chips').innerHTML = c;
```
